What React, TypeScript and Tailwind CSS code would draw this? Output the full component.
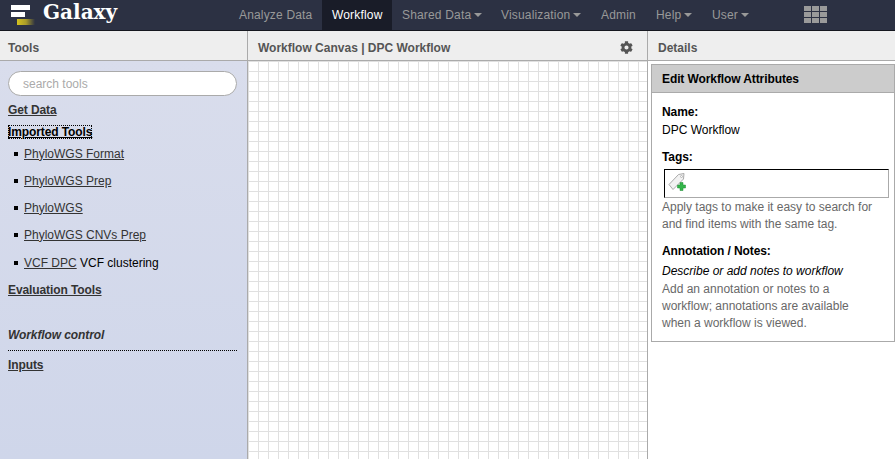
import { FaCog } from "react-icons/fa"

const tools = ["PhyloWGS Format", "PhyloWGS Prep", "PhyloWGS", "PhyloWGS CNVs Prep"]

function Caret() {
  return <span className="ml-[3px] inline-block border-x-[4px] border-t-[4px] border-x-transparent border-t-[#999] align-middle" />
}

function NavItem({ label, caret, active, className }: { label: string; caret?: boolean; active?: boolean; className: string }) {
  return (
    <div className={`flex h-[30px] shrink-0 items-center whitespace-nowrap pl-[10px] tracking-[0.17px] ${active ? "bg-[#191c28] text-white" : "text-[#999]"} ${className}`}>
      {label}
      {caret && <Caret />}
    </div>
  )
}

function Logo() {
  return (
    <svg width="26" height="26" viewBox="0 0 26 26" className="ml-[10px] mr-[7px] shrink-0">
      <defs>
        <linearGradient id="gold" x1="0" x2="1" y1="0" y2="0">
          <stop offset="0" stopColor="#d4c21f" />
          <stop offset="0.5" stopColor="#a99b2a" />
          <stop offset="1" stopColor="#2c3143" />
        </linearGradient>
      </defs>
      <rect x="1" y="5" width="19" height="5" fill="#fff" />
      <rect x="1" y="12" width="14" height="5" fill="#fff" />
      <rect x="7" y="19" width="18" height="6" fill="url(#gold)" />
    </svg>
  )
}

function PanelHeader({ children, className }: { children: React.ReactNode; className?: string }) {
  return (
    <div className={`flex h-[30px] shrink-0 items-center border-b border-[#aaa] bg-[#eee] pt-[4px] text-[12px] font-bold text-[#555] ${className ?? ""}`}>
      {children}
    </div>
  )
}

export default function App() {
  return (
    <div className="flex h-[459px] w-[895px] flex-col overflow-hidden bg-white font-['Liberation_Sans',Arial,sans-serif] text-[12px]">
      <div className="flex h-[31px] shrink-0 items-start border-b border-[#15171f] bg-[#2c3143]">
        <Logo />
        <div className="w-[186px] font-['DejaVu_Serif',serif] text-[20px] leading-[24px] font-bold text-white">Galaxy</div>
        <NavItem label="Analyze Data" className="w-[93px]" />
        <NavItem label="Workflow" active className="w-[70px] tracking-[0.05px]" />
        <NavItem label="Shared Data" caret className="w-[99px]" />
        <NavItem label="Visualization" caret className="w-[100px]" />
        <NavItem label="Admin" className="w-[55px]" />
        <NavItem label="Help" caret className="w-[56px]" />
        <NavItem label="User" caret className="w-[55px]" />
        <div className="ml-[47px] mt-[6px] grid grid-cols-3 gap-x-[1px] gap-y-[1px]">
          {Array.from({ length: 9 }).map((_, i) => (
            <div key={i} className="h-[5px] w-[7px] bg-[#9a9a9a]" />
          ))}
        </div>
      </div>

      <div className="flex min-h-0 flex-1">
        <div className="flex w-[248px] shrink-0 flex-col border-r border-[#aaa]">
          <PanelHeader className="pl-[8px]">Tools</PanelHeader>
          <div className="flex-1 bg-gradient-to-b from-[#d9ddec] to-[#cfd6ea] px-[8px] pt-[10px] text-[#333]">
            <div className="flex h-[25px] w-[229px] items-center rounded-full border border-[#aaa] bg-white pl-[14px] text-[#aaa]">search tools</div>
            <div className="mt-[3px] h-[22px] leading-[22px] font-bold tracking-[-0.1px] underline">Get Data</div>
            <div className="h-[22px] leading-[22px] font-bold tracking-[-0.1px] text-black underline">
              <span className="outline-1 -outline-offset-1 outline-dotted outline-black">Imported Tools</span>
            </div>
            <ul className="mt-[-3px]">
              {tools.map(t => (
                <li key={t} className="flex h-[27px] items-center pl-[6px]">
                  <span className="mr-[6px] h-[4px] w-[4px] bg-black" />
                  <span className="underline">{t}</span>
                </li>
              ))}
              <li className="mt-[1px] flex h-[27px] items-center pl-[6px] text-black">
                <span className="mr-[6px] h-[4px] w-[4px] bg-black" />
                <span className="text-[#333] underline">VCF DPC</span>&nbsp;VCF clustering
              </li>
            </ul>
            <div className="mt-[3px] h-[22px] leading-[22px] font-bold tracking-[-0.1px] underline">Evaluation Tools</div>
            <div className="mt-[23px] h-[27px] w-[229px] border-b border-dotted border-black leading-[22px] font-bold tracking-[-0.1px] italic">Workflow control</div>
            <div className="mt-[3px] h-[22px] leading-[22px] font-bold tracking-[-0.1px] underline">Inputs</div>
          </div>
        </div>

        <div className="flex w-[400px] shrink-0 flex-col border-r border-[#aaa]">
          <PanelHeader className="justify-between pl-[10px] pr-[14px]">
            <span>Workflow Canvas | DPC Workflow</span>
            <FaCog size={13} className="text-[#555]" />
          </PanelHeader>
          <div className="flex-1 bg-white bg-[linear-gradient(to_right,#e0e0e0_1px,transparent_1px),linear-gradient(to_bottom,#e0e0e0_1px,transparent_1px)] bg-[size:10px_10px]" />
        </div>

        <div className="flex min-w-0 flex-1 flex-col">
          <PanelHeader className="pl-[10px]">Details</PanelHeader>
          <div className="pl-[3px] pt-[3px]">
            <div className="border border-[#aaa] bg-white">
              <div className="flex h-[28px] items-center border-b border-[#aaa] bg-[#ccc] pl-[10px] font-bold tracking-[-0.1px] text-black">Edit Workflow Attributes</div>
              <div className="px-[10px] pt-[10px] pb-[9px]">
                <div className="leading-[18px] font-bold tracking-[-0.1px] text-black">Name:</div>
                <div className="leading-[18px] text-black">DPC Workflow</div>
                <div className="mt-[9px] leading-[18px] font-bold tracking-[-0.1px] text-black">Tags:</div>
                <div className="mt-[3px] ml-[2px] mr-[-5px] flex h-[29px] items-center border border-t-black border-l-black border-r-[#aaa] border-b-[#aaa] pl-[3px]">
                  <svg width="20" height="21" viewBox="0 0 20 21">
                    <path d="M1 11.500 L10.500 1.500 L16 0.500 L15.500 6 L5 16.500 Z" fill="#f2f2f2" stroke="#a9a9a9" />
                    <circle cx="13.500" cy="3.500" r="1" fill="#fff" stroke="#999" strokeWidth="0.6" />
                    <path d="M12 9.500h3v2.500h2.500v3H15v2.500h-3V15H9.500v-3H12z" fill="#33b54a" stroke="#1c8a33" strokeWidth="0.5" />
                  </svg>
                </div>
                <div className="mt-[1px] leading-[17px] text-[#686868]">Apply tags to make it easy to search for<br />and find items with the same tag.</div>
                <div className="mt-[9px] leading-[18px] font-bold tracking-[-0.1px] text-black">Annotation / Notes:</div>
                <div className="mt-[2px] leading-[18px] italic text-black">Describe or add notes to workflow</div>
                <div className="mt-[1px] leading-[17px] text-[#686868]">Add an annotation or notes to a<br />workflow; annotations are available<br />when a workflow is viewed.</div>
              </div>
            </div>
          </div>
        </div>
      </div>
    </div>
  )
}
